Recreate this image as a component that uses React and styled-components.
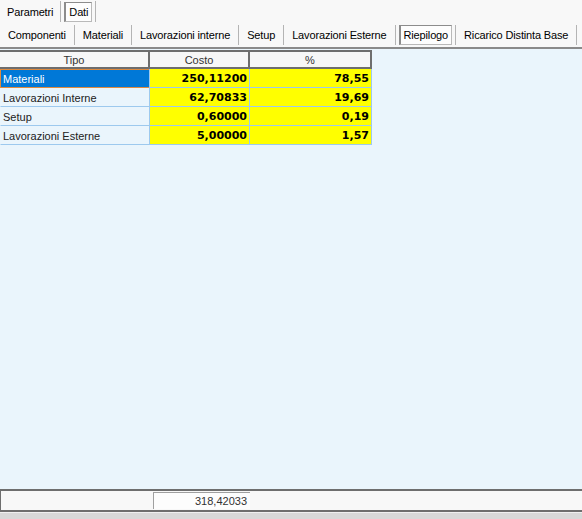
import React from 'react'
import styled, { createGlobalStyle } from 'styled-components'

const GlobalStyle = createGlobalStyle`
  html, body {
    margin: 0;
    padding: 0;
    background: #f8f8f8;
  }
  * {
    box-sizing: border-box;
  }
`

const topTabs = [
  { label: 'Parametri' },
  { label: 'Dati', active: true },
]

const subTabs = [
  { label: 'Componenti' },
  { label: 'Materiali' },
  { label: 'Lavorazioni interne' },
  { label: 'Setup' },
  { label: 'Lavorazioni Esterne' },
  { label: 'Riepilogo', active: true },
  { label: 'Ricarico Distinta Base' },
]

const rows = [
  { tipo: 'Materiali', costo: '250,11200', perc: '78,55', selected: true },
  { tipo: 'Lavorazioni Interne', costo: '62,70833', perc: '19,69' },
  { tipo: 'Setup', costo: '0,60000', perc: '0,19' },
  { tipo: 'Lavorazioni Esterne', costo: '5,00000', perc: '1,57' },
]

const App = () => {
  return (
    <Window>
      <GlobalStyle />
      <TabRow $height={24}>
        {topTabs.map((t) => (
          <Tab key={t.label} $pad={t.active ? 3 : 4}>
            <TabLabel $active={t.active}>{t.label}</TabLabel>
          </Tab>
        ))}
      </TabRow>
      <TabRow $height={25} $line>
        {subTabs.map((t) => (
          <Tab key={t.label} $pad={t.active ? 3 : 5}>
            <TabLabel $active={t.active}>{t.label}</TabLabel>
          </Tab>
        ))}
      </TabRow>
      <GridArea>
        <Grid>
          <HeadCell>Tipo</HeadCell>
          <HeadCell>Costo</HeadCell>
          <HeadCell>%</HeadCell>
          {rows.map((r) => (
            <React.Fragment key={r.tipo}>
              <TipoCell $selected={r.selected}>{r.tipo}</TipoCell>
              <NumCell>{r.costo}</NumCell>
              <NumCell>{r.perc}</NumCell>
            </React.Fragment>
          ))}
        </Grid>
      </GridArea>
      <Footer>
        <TotalBox>318,42033</TotalBox>
      </Footer>
      <StatusBar />
    </Window>
  )
}

export default App

const Window = styled.div`
  width: 582px;
  height: 519px;
  display: flex;
  flex-direction: column;
  background: #f8f8f8;
  font-family: "Liberation Sans", Arial, sans-serif;
  font-size: 11px;
  color: #000;
  overflow: hidden;
`

const TabRow = styled.div`
  height: ${(p) => p.$height}px;
  display: flex;
  align-items: stretch;
  padding-top: 1px;
  border-bottom: ${(p) => (p.$line ? '2px solid #8a8a8a' : 'none')};
`

const Tab = styled.div`
  display: flex;
  flex-shrink: 0;
  align-items: center;
  white-space: nowrap;
  padding: 0 ${(p) => p.$pad}px;
  border-right: 1px solid #b4b4b4;
  margin-bottom: 2px;
  font-size: 11px;
  letter-spacing: -0.15px;
`

const TabLabel = styled.span`
  display: flex;
  align-items: center;
  height: 20px;
  padding: 0 ${(p) => (p.$active ? 3 : 2)}px;
  background: ${(p) => (p.$active ? '#fdfdfd' : 'transparent')};
  border: 1px solid ${(p) => (p.$active ? '#b9b9b9' : 'transparent')};
  border-top-color: ${(p) => (p.$active ? '#8c8c8c' : 'transparent')};
  border-left-color: ${(p) => (p.$active ? '#8c8c8c' : 'transparent')};
  border-left-width: ${(p) => (p.$active ? 2 : 1)}px;
`

const GridArea = styled.div`
  flex: 1;
  background: #eaf5fc;
  padding-top: 1px;
`

const Grid = styled.div`
  display: grid;
  grid-template-columns: 150px 100px 122px;
  grid-template-rows: 19px;
  grid-auto-rows: 19px;
  width: 372px;
`

const HeadCell = styled.div`
  display: flex;
  align-items: center;
  justify-content: center;
  background: #f7f7f7;
  color: #333;
  border-top: 2px solid #6e6e6e;
  border-bottom: 2px solid #6e6e6e;
  border-right: 2px solid #6e6e6e;
  font-size: 11px;
`

const TipoCell = styled.div`
  display: flex;
  align-items: center;
  padding-left: 2px;
  background: ${(p) => (p.$selected ? '#0078d7' : '#eaf5fc')};
  color: ${(p) => (p.$selected ? '#ffffff' : '#222')};
  border: 1px solid ${(p) => (p.$selected ? '#e08b3e' : 'transparent')};
  border-bottom: 1px solid ${(p) => (p.$selected ? '#e08b3e' : '#9dc9ee')};
  border-right: 1px solid ${(p) => (p.$selected ? '#e08b3e' : '#9dc9ee')};
  box-shadow: 1px 0 0 #9dc9ee;
  font-size: 11px;
`

const NumCell = styled.div`
  display: flex;
  align-items: center;
  justify-content: flex-end;
  padding-right: 2px;
  background: #ffff00;
  border-bottom: 1px solid #9dc9ee;
  border-right: 1px solid #9dc9ee;
  border-left: 1px solid #9dc9ee;
  margin-left: -1px;
  font-family: "DejaVu Sans", Verdana, sans-serif;
  font-weight: bold;
  font-size: 11px;
`

const Footer = styled.div`
  height: 23px;
  border-top: 2px solid #6e6e6e;
  border-left: 1px solid #6e6e6e;
  border-bottom: 2px solid #6e6e6e;
  background: #f8f8f8;
  padding: 1px 0 0 152px;
`

const TotalBox = styled.div`
  width: 97px;
  height: 17px;
  display: flex;
  align-items: center;
  justify-content: flex-end;
  padding-right: 3px;
  background: #fdfdfd;
  border-top: 1px solid #a0a0a0;
  border-left: 1px solid #a0a0a0;
  color: #333;
  font-size: 11px;
`

const StatusBar = styled.div`
  height: 7px;
  border-top: 1px solid #f0f0f0;
  background: #d8d8d8;
`
